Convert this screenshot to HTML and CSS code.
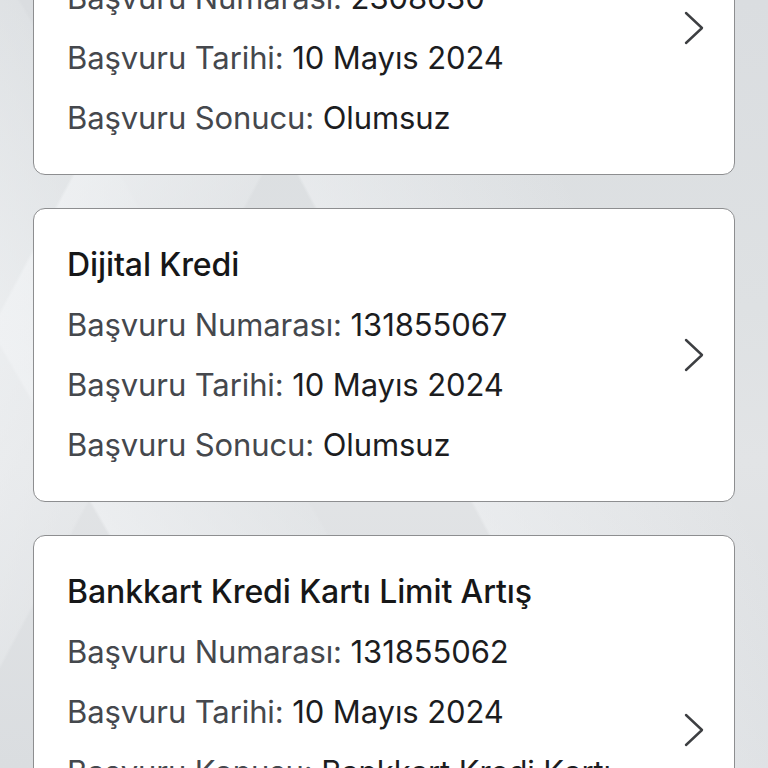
FILE: index.html
```html
<!DOCTYPE html>
<html lang="tr">
<head>
<meta charset="utf-8">
<link rel="stylesheet" href="styles.css">
</head>
<body>
<div class="bg">
  <div class="list">
    <div class="card">
      <div class="info">
        <div class="row title">Bireysel Kredi</div>
        <div class="row"><span class="lbl">Başvuru Numarası:</span> <span class="val">2308630</span></div>
        <div class="row"><span class="lbl">Başvuru Tarihi:</span> <span class="val">10 Mayıs 2024</span></div>
        <div class="row"><span class="lbl">Başvuru Sonucu:</span> <span class="val">Olumsuz</span></div>
      </div>
      <svg class="chev" width="22" height="34" viewBox="0 0 22 34"><path d="M3 2 L19 17 L3 32" fill="none" stroke="#3d3f42" stroke-width="2.4" stroke-linecap="round" stroke-linejoin="round"/></svg>
    </div>
    <div class="card">
      <div class="info">
        <div class="row title">Dijital Kredi</div>
        <div class="row"><span class="lbl">Başvuru Numarası:</span> <span class="val">131855067</span></div>
        <div class="row"><span class="lbl">Başvuru Tarihi:</span> <span class="val">10 Mayıs 2024</span></div>
        <div class="row"><span class="lbl">Başvuru Sonucu:</span> <span class="val">Olumsuz</span></div>
      </div>
      <svg class="chev" width="22" height="34" viewBox="0 0 22 34"><path d="M3 2 L19 17 L3 32" fill="none" stroke="#3d3f42" stroke-width="2.4" stroke-linecap="round" stroke-linejoin="round"/></svg>
    </div>
    <div class="card">
      <div class="info">
        <div class="row title">Bankkart Kredi Kartı Limit Artış</div>
        <div class="row"><span class="lbl">Başvuru Numarası:</span> <span class="val">131855062</span></div>
        <div class="row"><span class="lbl">Başvuru Tarihi:</span> <span class="val">10 Mayıs 2024</span></div>
        <div class="row"><span class="lbl">Başvuru Konusu:</span> <span class="val">Bankkart Kredi Kartı Limit Artış</span></div>
        <div class="row"><span class="lbl">Başvuru Sonucu:</span> <span class="val">Olumsuz</span></div>
      </div>
      <svg class="chev" width="22" height="34" viewBox="0 0 22 34"><path d="M3 2 L19 17 L3 32" fill="none" stroke="#3d3f42" stroke-width="2.4" stroke-linecap="round" stroke-linejoin="round"/></svg>
    </div>
  </div>
</div>
</body>
</html>
```

FILE: styles.css
```css
html, body {
  margin: 0;
  padding: 0;
  height: 100%;
  overflow: hidden;
}
body {
  font-family: Inter, Lato, sans-serif;
}
.bg {
  height: 768px;
  overflow: hidden;
  background:
    linear-gradient(62deg, rgba(255,255,255,0) 0, rgba(255,255,255,0) 52%, rgba(242,244,246,0.5) 52.3%, rgba(242,244,246,0) 75%),
    linear-gradient(118deg, rgba(255,255,255,0) 0, rgba(255,255,255,0) 14%, rgba(241,243,245,0.7) 14.3%, rgba(236,238,240,0.4) 30%, rgba(255,255,255,0) 30.3%),
    linear-gradient(60deg, rgba(255,255,255,0) 0, rgba(255,255,255,0) 20%, rgba(240,242,244,0.7) 20.3%, rgba(230,233,235,0.35) 38%, rgba(255,255,255,0) 38.3%),
    linear-gradient(180deg, #dadde0 0, #dee1e3 40%, #e2e4e6 60%, #dadde0 100%);
}
.list {
  display: flex;
  flex-direction: column;
  gap: 33px;
  padding: 0 33px;
  margin-top: -119px;
}
.card {
  background: #ffffff;
  border: 1.5px solid #8d8e90;
  border-radius: 12px;
  padding: 38px 29px 38px 33px;
  display: flex;
  align-items: center;
}
.info {
  flex: 1;
  display: flex;
  flex-direction: column;
  gap: 24px;
  max-width: 600px;
}
.row {
  font-size: 31px;
  line-height: 36px;
  color: #1c1d1f;
  letter-spacing: -0.1px;
}
.title {
  color: #161718;
  font-size: 32px;
  font-weight: 460;
}
.lbl {
  color: #45484d;
}
.val {
  color: #1c1d1f;
}
.chev {
  flex: none;
  display: block;
  margin-left: auto;
}
```
